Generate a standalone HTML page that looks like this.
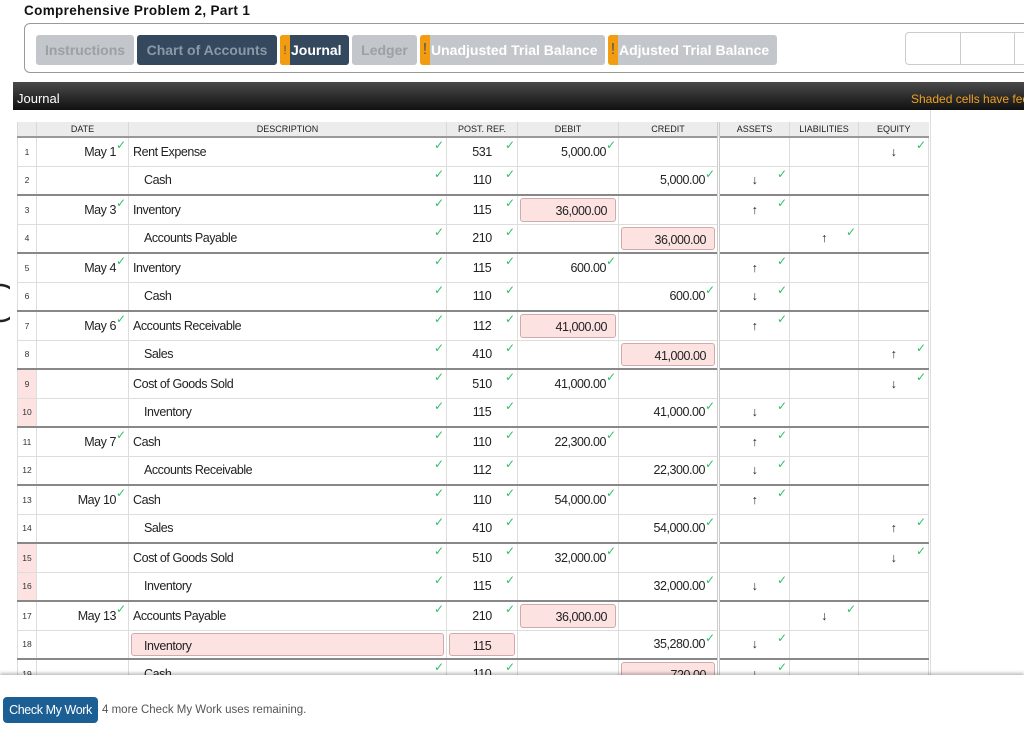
<!DOCTYPE html>
<html><head><meta charset="utf-8"><style>
*{box-sizing:border-box;margin:0;padding:0}
body{width:1024px;height:732px;overflow:hidden;background:#fff;font-family:"Liberation Sans",sans-serif;position:relative}
.title{position:absolute;left:24px;top:3px;font-size:13.5px;font-weight:bold;color:#111;letter-spacing:0.35px}
.bar{position:absolute;left:24px;top:23px;width:1010px;height:50px;border:1px solid #999;border-radius:6px}
.tab{position:absolute;top:35px;height:30px;border-radius:3px;font-weight:bold;font-size:14px;line-height:30px;overflow:hidden}
.g{background:#c3c7cb;color:#9aa0a6}
.d{background:#34495e;color:#8a99a8}
.w{color:#fff}
.ex{position:absolute;left:0;top:0;width:10px;height:30px;background:#f29c11;color:#555;font-weight:normal;text-align:center;font-size:16px}
.rbox{position:absolute;left:905px;top:32px;width:130px;height:33px;border:1px solid #ccc;border-radius:4px}
.jh{position:absolute;left:13px;top:82px;width:1011px;height:28px;background:linear-gradient(#4a4a4a,#111);color:#fff;font-size:13px}
.panel{position:absolute;left:17px;top:110px;width:914px;height:570px;border-right:1px solid #ddd}
table{position:absolute;left:17px;top:122px;border-collapse:collapse;table-layout:fixed;font-family:"Liberation Sans",sans-serif;font-size:12.5px;letter-spacing:-0.45px;color:#222}
th{height:15px;background:#ececec;font-weight:normal;font-size:9px;letter-spacing:0;border-left:1px solid #d8d8d8;border-bottom:2px solid #999;color:#222}
td{height:29px;border:1px solid #ddd;position:relative;padding:0 4px;vertical-align:middle;white-space:nowrap}
td.n{font-size:8.5px;text-align:center;padding:0;color:#333;letter-spacing:0}
td.r{text-align:right;padding-right:12px}
td.c{text-align:center}
td.ind{padding-left:15px}
tr.t td{border-top:2px solid #888}
.k{position:absolute;top:0px;right:2px;color:#2fbf6a;font-size:12px;font-family:"DejaVu Sans",sans-serif;letter-spacing:0}
.p{position:absolute;left:2px;right:2px;top:2px;bottom:2px;background:#fde2e2;border:1px solid #d4a9a9;border-radius:3px;padding:0 8px;line-height:24px}
.pn{background:#fde2e2}
.as{border-left:3px double #ccc}
.bot{position:absolute;left:0;top:675px;width:1024px;height:57px;background:#fff;box-shadow:0 -2px 3px rgba(0,0,0,.25)}
.btn{position:absolute;left:3px;top:22px;width:95px;height:26px;background:#1c5f95;border-radius:4px;color:#fff;font-size:12.5px;letter-spacing:-0.4px;line-height:26px;text-align:center}
.rem{position:absolute;left:102px;top:29px;font-size:11.5px;color:#555}
</style></head><body>
<div class="title">Comprehensive Problem 2, Part 1</div>
<div class="bar"></div>
<div class="tab g" style="left:36px;width:98px;text-align:center">Instructions</div>
<div class="tab d" style="left:137px;width:140px;text-align:center">Chart of Accounts</div>
<div class="tab d w" style="left:280px;width:69px;padding-left:11px"><span class="ex" style="font-size:12px">!</span>Journal</div>
<div class="tab g" style="left:352px;width:65px;text-align:center">Ledger</div>
<div class="tab g w" style="left:420px;width:185px;padding-left:11px"><span class="ex">!</span>Unadjusted Trial Balance</div>
<div class="tab g w" style="left:608px;width:169px;padding-left:11px"><span class="ex">!</span>Adjusted Trial Balance</div>
<div class="rbox"><div style="position:absolute;left:54px;top:0;bottom:0;border-left:1px solid #ccc"></div><div style="position:absolute;left:108px;top:0;bottom:0;border-left:1px solid #ccc"></div></div>
<div class="jh"><span style="position:absolute;left:4px;top:9px">Journal</span><span style="position:absolute;left:898px;top:10px;color:#f0a020;font-size:12px;white-space:nowrap">Shaded cells have feedback</span></div>
<div class="panel"></div>
<svg style="position:absolute;left:0;top:283px" width="10" height="40"><path d="M0 2 A18 18 0 0 1 0 38" fill="none" stroke="#222" stroke-width="2.5"/></svg>
<table>
<colgroup><col style="width:19px"><col style="width:92px"><col style="width:318px"><col style="width:71px"><col style="width:101px"><col style="width:100px"><col style="width:71px"><col style="width:69px"><col style="width:70px"></colgroup>
<tr><th></th><th>DATE</th><th>DESCRIPTION</th><th>POST. REF.</th><th>DEBIT</th><th>CREDIT</th><th class="as">ASSETS</th><th>LIABILITIES</th><th>EQUITY</th></tr>
<tr><td class="n">1</td><td class="r">May 1<span class="k">✓</span></td><td>Rent Expense<span class="k">✓</span></td><td class="c">531<span class="k">✓</span></td><td class="r">5,000.00<span class="k">✓</span></td><td></td><td class="as"></td><td></td><td class="c">↓<span class="k">✓</span></td></tr>
<tr><td class="n">2</td><td></td><td class="ind">Cash<span class="k">✓</span></td><td class="c">110<span class="k">✓</span></td><td></td><td class="r">5,000.00<span class="k">✓</span></td><td class="c as">↓<span class="k">✓</span></td><td></td><td></td></tr>
<tr class="t"><td class="n">3</td><td class="r">May 3<span class="k">✓</span></td><td>Inventory<span class="k">✓</span></td><td class="c">115<span class="k">✓</span></td><td><div class="p" style="text-align:right">36,000.00</div></td><td></td><td class="c as">↑<span class="k">✓</span></td><td></td><td></td></tr>
<tr><td class="n">4</td><td></td><td class="ind">Accounts Payable<span class="k">✓</span></td><td class="c">210<span class="k">✓</span></td><td></td><td><div class="p" style="text-align:right">36,000.00</div></td><td class="as"></td><td class="c">↑<span class="k">✓</span></td><td></td></tr>
<tr class="t"><td class="n">5</td><td class="r">May 4<span class="k">✓</span></td><td>Inventory<span class="k">✓</span></td><td class="c">115<span class="k">✓</span></td><td class="r">600.00<span class="k">✓</span></td><td></td><td class="c as">↑<span class="k">✓</span></td><td></td><td></td></tr>
<tr><td class="n">6</td><td></td><td class="ind">Cash<span class="k">✓</span></td><td class="c">110<span class="k">✓</span></td><td></td><td class="r">600.00<span class="k">✓</span></td><td class="c as">↓<span class="k">✓</span></td><td></td><td></td></tr>
<tr class="t"><td class="n">7</td><td class="r">May 6<span class="k">✓</span></td><td>Accounts Receivable<span class="k">✓</span></td><td class="c">112<span class="k">✓</span></td><td><div class="p" style="text-align:right">41,000.00</div></td><td></td><td class="c as">↑<span class="k">✓</span></td><td></td><td></td></tr>
<tr><td class="n">8</td><td></td><td class="ind">Sales<span class="k">✓</span></td><td class="c">410<span class="k">✓</span></td><td></td><td><div class="p" style="text-align:right">41,000.00</div></td><td class="as"></td><td></td><td class="c">↑<span class="k">✓</span></td></tr>
<tr class="t"><td class="n pn">9</td><td></td><td>Cost of Goods Sold<span class="k">✓</span></td><td class="c">510<span class="k">✓</span></td><td class="r">41,000.00<span class="k">✓</span></td><td></td><td class="as"></td><td></td><td class="c">↓<span class="k">✓</span></td></tr>
<tr><td class="n pn">10</td><td></td><td class="ind">Inventory<span class="k">✓</span></td><td class="c">115<span class="k">✓</span></td><td></td><td class="r">41,000.00<span class="k">✓</span></td><td class="c as">↓<span class="k">✓</span></td><td></td><td></td></tr>
<tr class="t"><td class="n">11</td><td class="r">May 7<span class="k">✓</span></td><td>Cash<span class="k">✓</span></td><td class="c">110<span class="k">✓</span></td><td class="r">22,300.00<span class="k">✓</span></td><td></td><td class="c as">↑<span class="k">✓</span></td><td></td><td></td></tr>
<tr><td class="n">12</td><td></td><td class="ind">Accounts Receivable<span class="k">✓</span></td><td class="c">112<span class="k">✓</span></td><td></td><td class="r">22,300.00<span class="k">✓</span></td><td class="c as">↓<span class="k">✓</span></td><td></td><td></td></tr>
<tr class="t"><td class="n">13</td><td class="r">May 10<span class="k">✓</span></td><td>Cash<span class="k">✓</span></td><td class="c">110<span class="k">✓</span></td><td class="r">54,000.00<span class="k">✓</span></td><td></td><td class="c as">↑<span class="k">✓</span></td><td></td><td></td></tr>
<tr><td class="n">14</td><td></td><td class="ind">Sales<span class="k">✓</span></td><td class="c">410<span class="k">✓</span></td><td></td><td class="r">54,000.00<span class="k">✓</span></td><td class="as"></td><td></td><td class="c">↑<span class="k">✓</span></td></tr>
<tr class="t"><td class="n pn">15</td><td></td><td>Cost of Goods Sold<span class="k">✓</span></td><td class="c">510<span class="k">✓</span></td><td class="r">32,000.00<span class="k">✓</span></td><td></td><td class="as"></td><td></td><td class="c">↓<span class="k">✓</span></td></tr>
<tr><td class="n pn">16</td><td></td><td class="ind">Inventory<span class="k">✓</span></td><td class="c">115<span class="k">✓</span></td><td></td><td class="r">32,000.00<span class="k">✓</span></td><td class="c as">↓<span class="k">✓</span></td><td></td><td></td></tr>
<tr class="t"><td class="n">17</td><td class="r">May 13<span class="k">✓</span></td><td>Accounts Payable<span class="k">✓</span></td><td class="c">210<span class="k">✓</span></td><td><div class="p" style="text-align:right">36,000.00</div></td><td></td><td class="as"></td><td class="c">↓<span class="k">✓</span></td><td></td></tr>
<tr><td class="n">18</td><td></td><td><div class="p" style="padding-left:12px">Inventory</div></td><td><div class="p" style="text-align:center">115</div></td><td></td><td class="r">35,280.00<span class="k">✓</span></td><td class="c as">↓<span class="k">✓</span></td><td></td><td></td></tr>
<tr class="t"><td class="n">19</td><td></td><td class="ind">Cash<span class="k">✓</span></td><td class="c">110<span class="k">✓</span></td><td></td><td><div class="p" style="text-align:right">720.00</div></td><td class="c as">↓<span class="k">✓</span></td><td></td><td></td></tr>
</table>
<div class="bot"><div class="btn">Check My Work</div><div class="rem">4 more Check My Work uses remaining.</div></div>
</body></html>
